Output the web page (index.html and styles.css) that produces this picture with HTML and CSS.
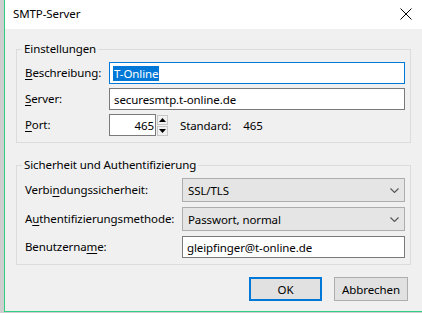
FILE: index.html
```html
<!DOCTYPE html>
<html lang="de">

<head>
    <meta charset="UTF-8">
    <title>SMTP-Server</title>
    <link rel="stylesheet" href="styles.css">
</head>

<body>
    <div class="desktop">
        <div class="window">
            <div class="titlebar">
                <span class="title">SMTP-Server</span>
                <svg class="close" width="12" height="12" viewBox="0 0 12 12">
                    <path d="M0.5 0.5 L11.5 11.5 M11.5 0.5 L0.5 11.5" stroke="#000" stroke-width="1" fill="none" />
                </svg>
            </div>
            <div class="content">
                <fieldset class="group group-settings">
                    <legend>Einstellungen</legend>
                    <label class="lbl"><u>B</u>eschreibung:</label>
                    <div class="field focused"><span class="selected">T-Online</span></div>

                    <label class="lbl"><u>S</u>erver:</label>
                    <div class="field">securesmtp.t-online.de</div>

                    <label class="lbl"><u>P</u>ort:</label>
                    <div class="port-row">
                        <div class="field port">465</div>
                        <div class="spinner">
                            <span class="spin-btn">
                                <svg width="7" height="4" viewBox="0 0 7 4"><path d="M3.5 0 L7 4 L0 4 Z" fill="#000" /></svg>
                            </span>
                            <span class="spin-btn">
                                <svg width="7" height="4" viewBox="0 0 7 4"><path d="M0 0 L7 0 L3.5 4 Z" fill="#000" /></svg>
                            </span>
                        </div>
                        <span class="std-label">Standard:</span>
                        <span class="std-value">465</span>
                    </div>
                </fieldset>

                <fieldset class="group group-security">
                    <legend>Sicherheit und Authentifizierung</legend>
                    <label class="lbl">Verbi<u>n</u>dungssicherheit:</label>
                    <div class="select">
                        <span>SSL/TLS</span>
                        <svg width="9" height="5" viewBox="0 0 9 5"><path d="M0.5 0.5 L4.5 4.5 L8.5 0.5" stroke="#555" stroke-width="1.1" fill="none" /></svg>
                    </div>

                    <label class="lbl">A<u>u</u>thentifizierungsmethode:</label>
                    <div class="select">
                        <span>Passwort, normal</span>
                        <svg width="9" height="5" viewBox="0 0 9 5"><path d="M0.5 0.5 L4.5 4.5 L8.5 0.5" stroke="#555" stroke-width="1.1" fill="none" /></svg>
                    </div>

                    <label class="lbl">Benutzerna<u>m</u>e:</label>
                    <div class="field">gleipfinger@t-online.de</div>
                </fieldset>

                <div class="buttons">
                    <button class="btn btn-default">OK</button>
                    <button class="btn">Abbrechen</button>
                </div>
            </div>
        </div>
    </div>
</body>

</html>
```

FILE: styles.css
```css
* {
    margin: 0;
    padding: 0;
    box-sizing: border-box;
}

body {
    background-color: #fff;
    width: 422px;
    height: 313px;
    overflow: hidden;
    font-family: "Noto Sans", sans-serif;
    font-size: 11.5px;
    letter-spacing: -0.1px;
    color: #000;
}

.desktop {
    height: 313px;
    padding-left: 4px;
    background-color: #cfcfcf;
}

.window {
    height: 312px;
    display: flex;
    flex-direction: column;
    border-left: 1px solid #2ecf80;
    border-bottom: 1px solid #2ecf80;
}

.titlebar {
    height: 29px;
    background-color: #fff;
    display: flex;
    align-items: center;
    justify-content: space-between;
    padding: 0 10px 2px 8px;
}

.close {
    display: block;
}

.content {
    flex: 1;
    background-color: #f0f0f0;
    padding: 12px 11px 0 11px;
    display: flex;
    flex-direction: column;
}

.group {
    border: 1px solid #dcdcdc;
    display: grid;
    align-items: center;
    row-gap: 4px;
    padding: 5px 5px 6px 8px;
}

.group legend {
    line-height: 16px;
    padding: 0 2px;
    margin-left: -3px;
}

.group-settings {
    grid-template-columns: 84px 1fr;
    grid-template-rows: 22px 22px 22px;
}

.group-security {
    margin-top: 14px;
    grid-template-columns: 157px 1fr;
    grid-template-rows: 24px 24px 22px;
    row-gap: 5px;
}

.lbl {
    line-height: 16px;
    white-space: nowrap;
}

.lbl u {
    text-underline-offset: 2px;
}

.field {
    height: 22px;
    border: 1px solid #7a7a7a;
    background-color: #fff;
    display: flex;
    align-items: center;
    padding: 0 4px;
    white-space: nowrap;
}

.field.focused {
    border-color: #0078d7;
}

.selected {
    background-color: #0078d7;
    color: #fff;
    padding: 0 1px;
    margin-left: -1px;
    line-height: 15px;
}

.port-row {
    display: flex;
    align-items: center;
    height: 22px;
}

.field.port {
    width: 47px;
    justify-content: flex-end;
    padding: 0 1px 0 0;
}

.spinner {
    width: 11px;
    height: 21px;
    margin-left: 1px;
    display: flex;
    flex-direction: column;
    gap: 1px;
}

.spin-btn {
    flex: 1;
    border: 1px solid #c6c6c6;
    background-color: #f0f0f0;
    display: flex;
    align-items: center;
    justify-content: center;
}

.spin-btn svg {
    display: block;
}

.std-label {
    margin-left: 12px;
}

.std-value {
    margin-left: 12px;
}

.select {
    height: 24px;
    border: 1px solid #adadad;
    background-color: #e5e5e5;
    display: flex;
    align-items: center;
    justify-content: space-between;
    padding: 0 5px 0 5px;
}

.select svg {
    display: block;
}

.buttons {
    display: flex;
    justify-content: flex-end;
    align-items: center;
    gap: 12px;
    margin-top: 12px;
    padding-right: 3px;
}

.btn {
    height: 24px;
    width: 74px;
    font-family: "Noto Sans", sans-serif;
    font-size: 11.5px;
    letter-spacing: -0.1px;
    color: #000;
    background-color: #e1e1e1;
    border: 1px solid #adadad;
}

.btn-default {
    width: 73px;
    border: 1px solid #0078d7;
    box-shadow: inset 0 0 0 1px #0078d7;
}
```
